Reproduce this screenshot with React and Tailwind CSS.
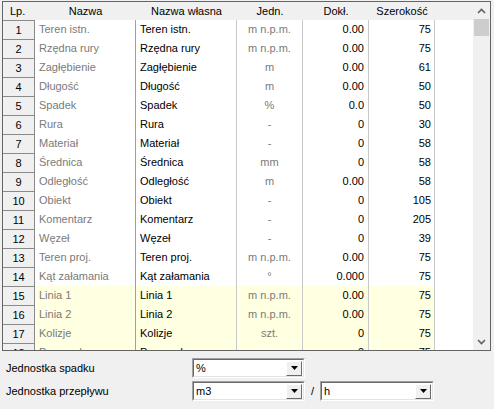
import React from 'react';

const rows = [
  ['1', 'Teren istn.', 'Teren istn.', 'm n.p.m.', '0.00', '75'],
  ['2', 'Rzędna rury', 'Rzędna rury', 'm n.p.m.', '0.00', '75'],
  ['3', 'Zagłębienie', 'Zagłębienie', 'm', '0.00', '61'],
  ['4', 'Długość', 'Długość', 'm', '0.00', '50'],
  ['5', 'Spadek', 'Spadek', '%', '0.0', '50'],
  ['6', 'Rura', 'Rura', '-', '0', '30'],
  ['7', 'Materiał', 'Materiał', '-', '0', '58'],
  ['8', 'Średnica', 'Średnica', 'mm', '0', '58'],
  ['9', 'Odległość', 'Odległość', 'm', '0.00', '58'],
  ['10', 'Obiekt', 'Obiekt', '-', '0', '105'],
  ['11', 'Komentarz', 'Komentarz', '-', '0', '205'],
  ['12', 'Węzeł', 'Węzeł', '-', '0', '39'],
  ['13', 'Teren proj.', 'Teren proj.', 'm n.p.m.', '0.00', '75'],
  ['14', 'Kąt załamania', 'Kąt załamania', '°', '0.000', '75'],
  ['15', 'Linia 1', 'Linia 1', 'm n.p.m.', '0.00', '75', true],
  ['16', 'Linia 2', 'Linia 2', 'm n.p.m.', '0.00', '75', true],
  ['17', 'Kolizje', 'Kolizje', 'szt.', '0', '75', true],
  ['18', 'Przewody', 'Przewody', '-', '0', '75', true],
];

const Chevron = ({ down }) => (
  <svg width="9" height="6" viewBox="0 0 9 6">
    <path
      d={down ? 'M1 1 L4.5 4.5 L8 1' : 'M1 5 L4.5 1.5 L8 5'}
      fill="none"
      stroke="#606060"
      strokeWidth="1.6"
    />
  </svg>
);

const DropButton = () => (
  <div className="w-[16px] h-[15px] bg-[#f0f0f0] border border-t-white border-l-white border-b-[#696969] border-r-[#696969] flex items-center justify-center">
    <svg width="7" height="4" viewBox="0 0 7 4">
      <path d="M0 0 H7 L3.5 4 Z" fill="#000" />
    </svg>
  </div>
);

const Select = ({ value, width }) => (
  <div className={`${width} h-[20px] border border-t-[#a0a0a0] border-l-[#a0a0a0] border-b-white border-r-white`}>
    <div className="h-full bg-white border border-t-[#696969] border-l-[#696969] border-b-[#e3e3e3] border-r-[#e3e3e3] flex items-center justify-between pl-[2px] pr-[1px]">
      <span className="leading-none">{value}</span>
      <DropButton />
    </div>
  </div>
);

export default function App() {
  return (
    <div
      className="w-[494px] h-[409px] bg-[#f0f0f0] text-[11px] text-black overflow-hidden"
      style={{ fontFamily: '"Liberation Sans", Arial, sans-serif' }}
    >
      {/* grid */}
      <div className="ml-[2px] mt-[1px] w-[489px] h-[350px] border border-[#646464] bg-white flex overflow-hidden">
        <div className="w-[470px] flex flex-col">
          {/* header */}
          <div className="flex h-[18px] bg-[#f0f0f0] items-center shrink-0">
            <div className="w-[32px] pl-[7px]">Lp.</div>
            <div className="w-[101px] text-center">Nazwa</div>
            <div className="w-[101px] text-center">Nazwa własna</div>
            <div className="w-[66px] text-center">Jedn.</div>
            <div className="w-[66px] text-center">Dokł.</div>
            <div className="w-[66px] text-center">Szerokość</div>
          </div>
          {rows.map(([lp, name, own, unit, prec, width, hl]) => (
            <div key={lp} className={`flex h-[19px] shrink-0 ${hl ? 'bg-[#ffffe1]' : 'bg-white'}`}>
              <div className="w-[32px] bg-[#f0f0f0] border-t border-r border-[#8a8a8a] flex items-center justify-center">
                {lp}
              </div>
              <div className="w-[101px] pl-[4px] flex items-center text-[#7a7a7a] border-r border-[#a0a0a0]">{name}</div>
              <div className="w-[101px] pl-[4px] flex items-center border-r border-[#c8c8c8]">{own}</div>
              <div className="w-[66px] flex items-center justify-center text-[#7a7a7a] border-r border-[#c8c8c8]">{unit}</div>
              <div className="w-[66px] flex items-center justify-end pr-[4px] border-r border-[#c8c8c8]">{prec}</div>
              <div className="w-[66px] flex items-center justify-end pr-[3px] border-r border-[#c8c8c8]">{width}</div>
              <div className="flex-1 bg-white" />
            </div>
          ))}
        </div>
        {/* scrollbar */}
        <div className="w-[17px] bg-[#f0f0f0] flex flex-col">
          <div className="h-[17px] flex items-center justify-center">
            <Chevron />
          </div>
          <div className="mx-[1px] h-[17px] bg-[#cdcdcd]" />
          <div className="flex-1" />
          <div className="h-[17px] flex items-center justify-center">
            <Chevron down />
          </div>
        </div>
      </div>

      {/* settings */}
      <div className="pl-[6px] pt-[7px] flex flex-col gap-[3px]">
        <div className="flex items-center">
          <div className="w-[186px]">Jednostka spadku</div>
          <Select value="%" width="w-[113px]" />
        </div>
        <div className="flex items-center">
          <div className="w-[186px]">Jednostka przepływu</div>
          <Select value="m3" width="w-[113px]" />
          <span className="w-[15px] text-center">/</span>
          <Select value="h" width="w-[114px]" />
        </div>
      </div>
    </div>
  );
}
